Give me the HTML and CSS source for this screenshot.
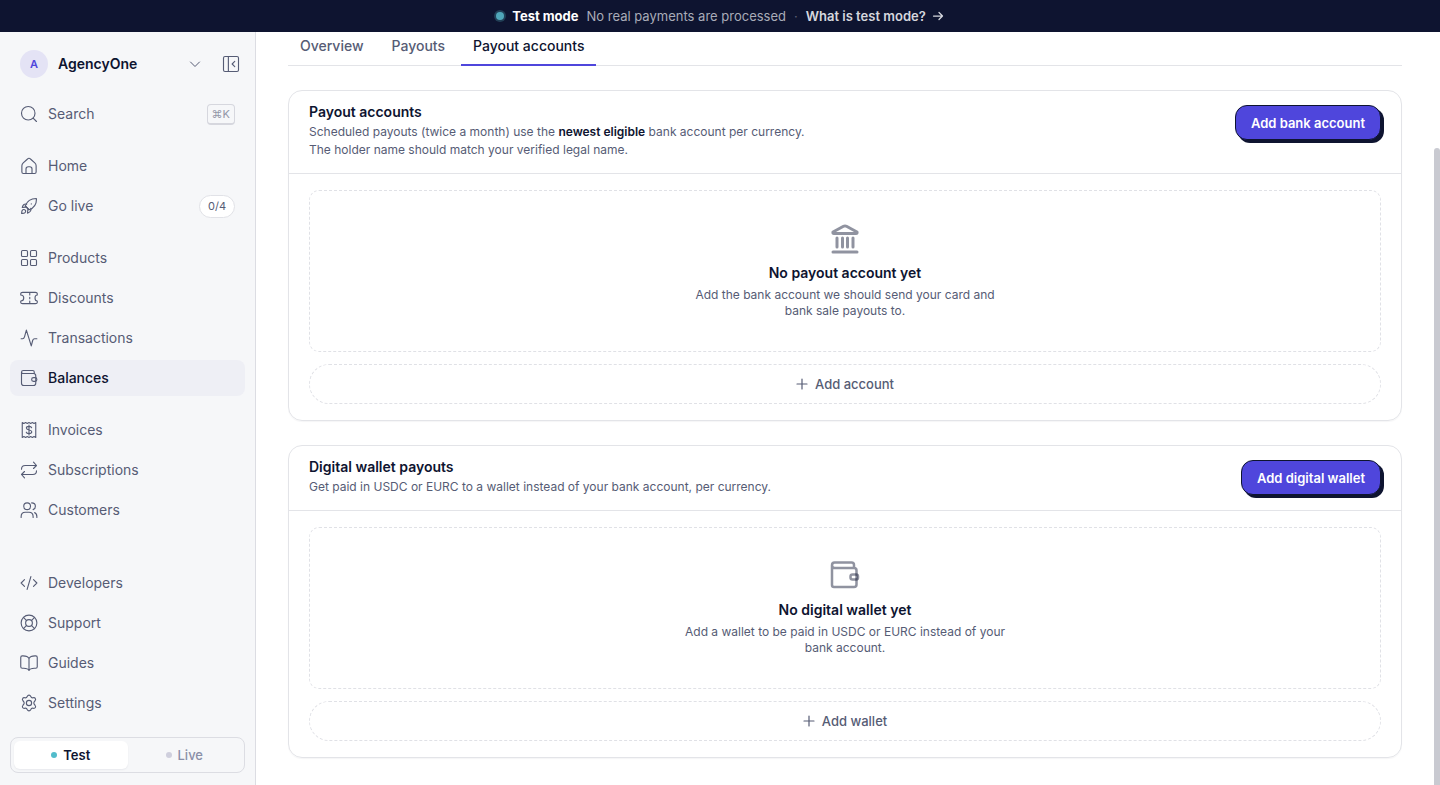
FILE: index.html
```html
<!DOCTYPE html>
<html lang="en">

<head>
	<meta charset="UTF-8">
	<meta name="viewport" content="width=device-width, initial-scale=1.0">
	<title>Payout accounts - AgencyOne</title>
	<link rel="stylesheet" href="styles.css">
</head>

<body>
	<div class="banner">
		<span class="banner-dot"></span>
		<strong>Test mode</strong>
		<span class="banner-text">No real payments are processed</span>
		<span class="banner-sep">·</span>
		<a href="#" class="banner-link">What is test mode?
			<svg class="icon-arrow" viewBox="0 0 24 24"><path d="M3 12h18M14 5l7 7-7 7" /></svg>
		</a>
	</div>

	<div class="shell">
		<aside class="sidebar">
			<div class="workspace">
				<button type="button" class="workspace-switch">
					<span class="avatar">A</span>
					<span class="workspace-name">AgencyOne</span>
					<svg class="icon-chevron" viewBox="0 0 24 24"><path d="M3 8l9 9 9-9" /></svg>
				</button>
				<button type="button" class="collapse" aria-label="Collapse sidebar">
					<svg class="icon" viewBox="0 0 24 24"><rect x="2" y="2" width="20" height="20" rx="2" /><path d="M8.500 2v20M17 8.500L13.500 12l3.500 3.500" /></svg>
				</button>
			</div>

			<button type="button" class="nav-item">
				<svg class="icon" viewBox="0 0 24 24"><circle cx="11" cy="11" r="9" /><path d="M17.500 17.500L22 22" /></svg>
				Search
				<kbd class="shortcut">⌘K</kbd>
			</button>

			<nav class="nav">
				<div class="nav-group">
					<a href="#" class="nav-item">
						<svg class="icon" viewBox="0 0 24 24"><path d="M2.500 11.500c0-1.600.6-2.600 1.800-3.700l5-4.500C10.600 2.200 11.200 1.700 12 1.700s1.400.5 2.700 1.600l5 4.500c1.200 1.100 1.800 2.100 1.800 3.700V20c0 1.500-.5 2-2 2h-15c-1.500 0-2-.5-2-2z" /><path d="M8 22v-6c0-2 1-3 3-3h2c2 0 3 1 3 3v6" /></svg>
						Home
					</a>
					<a href="#" class="nav-item">
						<svg class="icon" viewBox="0 0 24 24"><path d="M7 12c2-5.500 7-10 14.500-10 .4 0 .5.100.5.500 0 7.500-4.500 12.500-10 14.500z" /><path d="M9 9.500c-3-.8-5 .5-6 4.500l5-.5M14.500 15c.8 3-.5 5-4.500 6.500l.5-5.500M15 9.200h.1M7 12l5 5" /><path d="M7 17.500c-1.200-1.200-3-1-4 .2-.8 1-.7 3-.8 4.200 1.200-.1 3.200 0 4.200-.8 1.200-1 1.500-2.600.6-3.600z" /></svg>
						Go live
						<span class="count">0/4</span>
					</a>
				</div>
				<div class="nav-group">
					<a href="#" class="nav-item">
						<svg class="icon" viewBox="0 0 24 24"><rect x="2" y="2" width="8" height="8" rx="1.500" /><rect x="14" y="2" width="8" height="8" rx="1.500" /><rect x="2" y="14" width="8" height="8" rx="1.500" /><rect x="14" y="14" width="8" height="8" rx="1.500" /></svg>
						Products
					</a>
					<a href="#" class="nav-item">
						<svg class="icon" viewBox="0 0 24 24"><path d="M3.500 4.500h17c1.500 0 2.500.5 2.500 1.500v2c-2 0-3 2-3 4s1 4 3 4v2c0 1-1 1.500-2.500 1.500h-17C2 19.500 1 19 1 18v-2c3 0 4-2 4-4S4 8 1 8V6c0-1 1-1.500 2.500-1.500zM13 4.500V8M13 11v2M13 16v3.500" /></svg>
						Discounts
					</a>
					<a href="#" class="nav-item">
						<svg class="icon" viewBox="0 0 24 24"><path d="M1.500 13h2c1.500 0 2-.8 2.500-2.500L8.500 1.500 15 22.500l2-7.500c.5-1.500 1-2 2.500-2h3" /></svg>
						Transactions
					</a>
					<a href="#" class="nav-item active" aria-current="page">
						<svg class="icon" viewBox="0 0 24 24"><path d="M2 4.500V19c0 2 1 3 3 3h13c2 0 3-1 3-3V9c0-2-1-3-3-3H4.500C3 6 2 5.500 2 4.200S3 2 4.500 2H17c1.500 0 2 .5 2 2v2" /><rect x="15.500" y="11.500" width="7" height="5" rx="2.500" /></svg>
						Balances
					</a>
				</div>
				<div class="nav-group">
					<a href="#" class="nav-item">
						<svg class="icon" viewBox="0 0 24 24"><path d="M3 2l2.200 1.200L7.500 2l2.200 1.200L12 2l2.200 1.200L16.500 2l2.200 1.200L21 2v20l-2.300-1.200-2.200 1.200-2.300-1.200L12 22l-2.300-1.200L7.500 22l-2.300-1.200L3 22z" /><path d="M15.500 9c-.3-1.200-1.700-1.800-3.500-1.800-2 0-3.500.8-3.500 2.200 0 3.400 7.200 1.600 7.200 5 0 1.500-1.700 2.400-3.700 2.400-1.800 0-3.400-.6-3.700-1.900M12 5.500v13" /></svg>
						Invoices
					</a>
					<a href="#" class="nav-item">
						<svg class="icon" viewBox="0 0 24 24"><path d="M18 1.500L22 6l-4 4M22 6H7c-3.500 0-5 2-5 5M6 22.500L2 18l4-4M2 18h15c3.500 0 5-2 5-5" /></svg>
						Subscriptions
					</a>
					<a href="#" class="nav-item">
						<svg class="icon" viewBox="0 0 24 24"><circle cx="9.500" cy="7" r="4.500" /><path d="M1.500 22v-1c0-4 2-6 5.500-6h5c3.500 0 5.500 2 5.500 6v1M15.500 2.500c4 0 5 2.500 5 4.500s-1 3.800-3 4.500M19.500 15.500c2 .8 3 2.500 3 5.500v1" /></svg>
						Customers
					</a>
				</div>
			</nav>

			<nav class="nav-group nav-bottom" aria-label="Resources">
				<a href="#" class="nav-item">
					<svg class="icon" viewBox="0 0 24 24"><path d="M6 7.500L1.500 12 6 16.500M18 7.500l4.500 4.500-4.500 4.500M14.500 3.500l-5 17" /></svg>
					Developers
				</a>
				<a href="#" class="nav-item">
					<svg class="icon" viewBox="0 0 24 24"><circle cx="12" cy="12" r="10.500" /><circle cx="12" cy="12" r="4.500" /><path d="M15.200 8.800l4.200-4.200M8.800 8.800L4.600 4.600M8.800 15.200l-4.200 4.200M15.200 15.200l4.200 4.200" /></svg>
					Support
				</a>
				<a href="#" class="nav-item">
					<svg class="icon" viewBox="0 0 24 24"><path d="M12 6c-1-2-3-3.500-8-3.500H3c-1.500 0-2 .5-2 2V17c0 1.500.5 2 2 2h2c4 0 6 .8 7 3 1-2.200 3-3 7-3h2c1.500 0 2-.5 2-2V4.500c0-1.500-.5-2-2-2h-1C15 2.500 13 4 12 6zM12 6v16" /></svg>
					Guides
				</a>
				<a href="#" class="nav-item">
					<svg class="icon" viewBox="0 0 24 24"><circle cx="12" cy="12" r="3.500" /><path d="M9.600 3.400C10.200 2 10.900 1.500 12 1.500s1.800.5 2.400 1.900c.6 1.500 1.500 1.900 3 1.600 1.600-.3 2.500 0 3.100 1 .6.900.5 1.800-.5 3-1.100 1.200-1.600 1.800-1.600 3s.5 1.800 1.600 3c1 1.200 1.100 2.100.5 3-.6 1-1.500 1.300-3.100 1-1.500-.3-2.400.1-3 1.600-.6 1.400-1.300 1.900-2.400 1.900s-1.800-.5-2.400-1.900c-.6-1.500-1.500-1.900-3-1.600-1.600.3-2.500 0-3.100-1-.6-.9-.5-1.800.5-3 1.100-1.200 1.600-1.800 1.600-3S5.100 10.200 4 9C3 7.800 2.900 6.900 3.500 6c.6-1 1.500-1.300 3.100-1 1.500.3 2.400-.1 3-1.600z" /></svg>
					Settings
				</a>
			</nav>

			<div class="mode-toggle">
				<button type="button" class="mode selected" aria-pressed="true"><span class="mode-dot"></span>Test</button>
				<button type="button" class="mode" aria-pressed="false"><span class="mode-dot"></span>Live</button>
			</div>
		</aside>

		<main class="content">
			<nav class="tabs" aria-label="Balances">
				<a href="#" class="tab">Overview</a>
				<a href="#" class="tab">Payouts</a>
				<a href="#" class="tab current" aria-current="page">Payout accounts</a>
			</nav>

			<section class="card">
				<header class="card-header">
					<div>
						<h2 class="card-title">Payout accounts</h2>
						<p class="card-text">Scheduled payouts (twice a month) use the <strong>newest eligible</strong> bank account per currency.<br>The holder name should match your verified legal name.</p>
					</div>
					<button type="button" class="primary">Add bank account</button>
				</header>
				<div class="card-body">
					<div class="empty">
						<svg class="empty-icon" viewBox="0 0 32 32"><path d="M4 9L14.500 3.300q1.500-.8 3 0L28 9q.5 1.500-1 1.500H5q-1.500 0-1-1.500zM4 29h24M8 15v9M13.500 15v9M18.500 15v9M24 15v9" /></svg>
						<h3 class="empty-title">No payout account yet</h3>
						<p class="empty-text">Add the bank account we should send your card and bank sale payouts to.</p>
					</div>
					<button type="button" class="add">
						<svg class="icon-plus" viewBox="0 0 12 12"><path d="M6 1v10M1 6h10" /></svg>
						Add account
					</button>
				</div>
			</section>

			<section class="card">
				<header class="card-header">
					<div>
						<h2 class="card-title">Digital wallet payouts</h2>
						<p class="card-text">Get paid in USDC or EURC to a wallet instead of your bank account, per currency.</p>
					</div>
					<button type="button" class="primary">Add digital wallet</button>
				</header>
				<div class="card-body">
					<div class="empty">
						<svg class="empty-icon wallet" viewBox="0 0 32 32"><path d="M3 5.500V25q0 2 2 2h20q2.500 0 2.500-2.500V10.500Q27.500 8 25 8H5.500Q3 8 3 5.300T5.500 2.500h17Q25 2.500 25 5v2.500" /><rect x="21.500" y="14.500" width="7.500" height="5" rx="2" /></svg>
						<h3 class="empty-title">No digital wallet yet</h3>
						<p class="empty-text">Add a wallet to be paid in USDC or EURC instead of your bank account.</p>
					</div>
					<button type="button" class="add">
						<svg class="icon-plus" viewBox="0 0 12 12"><path d="M6 1v10M1 6h10" /></svg>
						Add wallet
					</button>
				</div>
			</section>
			<div class="scroll-thumb"></div>
		</main>
	</div>
</body>

</html>
```
FILE: styles.css
```css
* {
	box-sizing: border-box;
	margin: 0;
	padding: 0;
}

body {
	display: flex;
	flex-direction: column;
	min-height: 100vh;
	background-color: #fff;
	color: #0e1430;
	font: 14px/20px Inter, sans-serif;
}

button {
	border: 0;
	background: none;
	color: inherit;
	font: inherit;
	cursor: pointer;
}

a {
	color: inherit;
	text-decoration: none;
}

svg {
	flex: none;
	fill: none;
	stroke: currentColor;
	stroke-width: 1.5;
	stroke-linecap: round;
	stroke-linejoin: round;
}

/* banner */
.banner {
	display: flex;
	align-items: center;
	justify-content: center;
	gap: 8px;
	height: 32px;
	background-color: #0e1430;
	color: #fff;
	font-size: 13px;
}

.banner strong {
	font-weight: 700;
}

.banner-dot {
	width: 8px;
	height: 8px;
	border-radius: 50%;
	background-color: #4fa6b9;
	box-shadow: 0 0 0 2px #213f56;
}

.banner-text {
	color: #a9acb8;
}

.banner-sep {
	color: #5c6074;
}

.banner-link {
	display: flex;
	align-items: center;
	gap: 6px;
	color: #d5d7de;
	font-weight: 600;
}

.icon-arrow {
	width: 12px;
	height: 12px;
	stroke-width: 2.5;
}

.shell {
	display: flex;
	flex: 1;
}

/* sidebar */
.sidebar {
	display: flex;
	flex-direction: column;
	width: 256px;
	padding: 14px 10px 12px;
	border-right: 1px solid #dcdde3;
	background-color: #f6f7f9;
}

.workspace {
	display: flex;
	align-items: center;
	height: 36px;
	margin-bottom: 14px;
	padding: 0 5px 0 10px;
}

.workspace-switch {
	display: flex;
	flex: 1;
	align-items: center;
	gap: 10px;
	text-align: left;
}

.avatar {
	width: 28px;
	border-radius: 50%;
	background-color: #e4e3f5;
	color: #4f46dc;
	font-size: 11px;
	font-weight: 600;
	line-height: 28px;
	text-align: center;
}

.workspace-name {
	flex: 1;
	font-size: 14px;
	font-weight: 600;
}

.icon-chevron {
	width: 12px;
	height: 12px;
	margin-right: 21px;
	color: #565c75;
	stroke-width: 2;
}

.collapse {
	display: flex;
	color: #565c75;
}

.icon {
	width: 18px;
	height: 18px;
}

.nav {
	display: flex;
	flex-direction: column;
	gap: 16px;
	margin-top: 16px;
}

.nav-group {
	display: flex;
	flex-direction: column;
	gap: 4px;
}

.nav-item {
	display: flex;
	align-items: center;
	gap: 10px;
	height: 36px;
	padding: 0 10px;
	border-radius: 8px;
	color: #565c75;
	font-size: 14px;
}

.nav-item.active {
	background-color: #eeeff5;
	color: #0e1430;
	font-weight: 500;
}

.active .icon {
	color: #565c75;
}

.shortcut {
	margin-left: auto;
	padding: 0 4px;
	border: 1px solid #d6d7de;
	border-bottom-width: 2px;
	border-radius: 4px;
	color: #9498a8;
	font: 11px/18px Inter, sans-serif;
}

.count {
	margin-left: auto;
	padding: 0 8px;
	border: 1px solid #e1e2e7;
	border-radius: 12px;
	background-color: #fff;
	font-size: 11px;
	line-height: 21px;
}

.nav-bottom {
	margin-top: auto;
	margin-bottom: 16px;
}

.mode-toggle {
	display: flex;
	height: 36px;
	padding: 3px;
	border: 1px solid #dcdde3;
	border-radius: 8px;
}

.mode {
	display: flex;
	flex: 1;
	align-items: center;
	justify-content: center;
	gap: 6px;
	border-radius: 6px;
	color: #8a8fa8;
	font-size: 13px;
	font-weight: 500;
}

.mode-dot {
	width: 6px;
	height: 6px;
	border-radius: 50%;
	background-color: #cfcfdd;
}

.mode.selected {
	background-color: #fff;
	box-shadow: 0 1px 2px rgba(14, 20, 48, 0.06);
	color: #0e1430;
	font-weight: 600;
}

.selected .mode-dot {
	background-color: #52bccb;
}

/* content */
.content {
	position: relative;
	flex: 1;
	min-width: 0;
	padding: 0 38px 24px 32px;
}

.tabs {
	display: flex;
	gap: 4px;
	border-bottom: 1px solid #e3e4e8;
}

.tab {
	height: 34px;
	margin-bottom: -1px;
	padding: 4px 12px 0;
	border-bottom: 2px solid transparent;
	color: #565c75;
	font-weight: 500;
}

.tab.current {
	border-color: #4f46dc;
	color: #0e1430;
}

.card {
	margin-top: 24px;
	border: 1px solid #e3e4e8;
	border-radius: 14px;
	box-shadow: 0 1px 1px rgba(14, 20, 48, 0.04);
}

.card-header {
	display: flex;
	align-items: flex-start;
	justify-content: space-between;
	gap: 16px;
	padding: 14px 20px;
	border-bottom: 1px solid #e3e4e8;
}

.card-title {
	margin-bottom: 4px;
	font-size: 14px;
	font-weight: 600;
	line-height: 14px;
}

.card-text {
	color: #565c75;
	font-size: 12px;
	line-height: 18px;
}

.card-text strong {
	color: #0e1430;
	font-weight: 600;
}

.primary {
	flex: none;
	height: 35px;
	padding: 0 15px;
	border: 1px solid #0e1430;
	border-radius: 12px;
	background-color: #4f46dc;
	box-shadow: 3px 3px 0 #0e1430;
	color: #fff;
	font-size: 13px;
	font-weight: 600;
}

.card-body {
	display: flex;
	flex-direction: column;
	gap: 12px;
	padding: 16px 20px;
}

.empty {
	display: flex;
	flex-direction: column;
	align-items: center;
	padding: 32px 20px;
	border: 1px dashed #e0e1e6;
	border-radius: 10px;
	text-align: center;
}

.empty-icon {
	width: 32px;
	height: 32px;
	margin-bottom: 8px;
	color: rgba(14, 20, 48, 0.46);
	stroke-width: 3;
}

.empty-icon.wallet {
	stroke-width: 2.5;
}

.empty-title {
	margin-bottom: 4px;
	font-size: 14px;
	font-weight: 600;
}

.empty-text {
	max-width: 330px;
	color: #565c75;
	font-size: 12px;
	line-height: 16px;
}

.add {
	display: flex;
	align-items: center;
	justify-content: center;
	gap: 7px;
	height: 40px;
	border: 1px dashed #e0e1e6;
	border-radius: 20px;
	color: #565c75;
	font-size: 13px;
	font-weight: 500;
}

.icon-plus {
	width: 12px;
	height: 12px;
	stroke-width: 1.2;
}

.scroll-thumb {
	position: absolute;
	top: 116px;
	right: 0;
	bottom: 0;
	width: 6px;
	border-radius: 3px 3px 0 0;
	background-color: #c9cad1;
}
```
